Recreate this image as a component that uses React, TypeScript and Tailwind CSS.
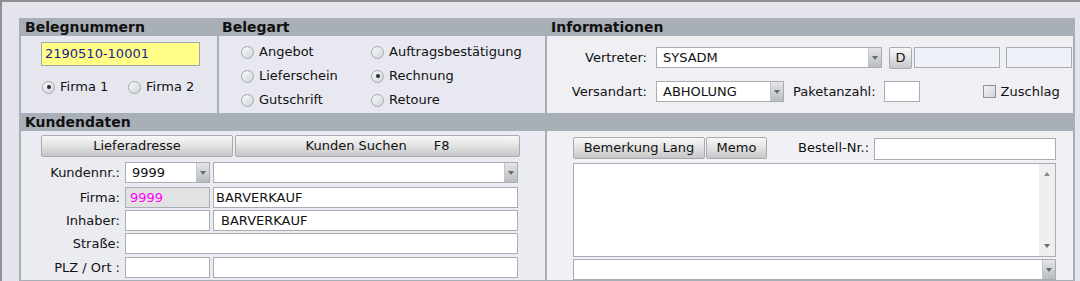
import React from 'react';

const font = { fontFamily: '"DejaVu Sans", Verdana, sans-serif' };

function Radio({ label, checked = false }: { label: string; checked?: boolean }) {
  return (
    <div className="flex items-center gap-[5px]">
      <span className="w-[13px] h-[13px] rounded-full border border-[#a3a8ae] bg-linear-to-br from-[#fbfbfc] to-[#cfd3d8] flex items-center justify-center">
        {checked && <span className="w-[4px] h-[4px] rounded-full bg-[#2b2b2b]" />}
      </span>
      <span>{label}</span>
    </div>
  );
}

function Arrow({ up = false }: { up?: boolean }) {
  return (
    <span
      className={
        up
          ? 'w-0 h-0 border-l-[3px] border-r-[3px] border-b-[4px] border-l-transparent border-r-transparent border-b-[#8a8a8a]'
          : 'w-0 h-0 border-l-[3px] border-r-[3px] border-t-[4px] border-l-transparent border-r-transparent border-t-[#6a6a6a]'
      }
    />
  );
}

function Combo({ w, value = '' }: { w: string; value?: string }) {
  return (
    <div className={`${w} h-[21px] flex border border-[#a9adb3] bg-white`}>
      <div className="flex-1 pl-[6px] leading-[19px] truncate">{value}</div>
      <div className="w-[13px] h-full bg-linear-to-b from-[#e4e6e9] to-[#b8bcc1] border-l border-[#c3c7cc] flex items-center justify-center">
        <Arrow />
      </div>
    </div>
  );
}

function Field({ w, value = '', cls = 'bg-white', pad = 'pl-[4px]' }: { w: string; value?: string; cls?: string; pad?: string }) {
  return (
    <div className={`${w} h-[21px] border border-[#a9adb3] ${cls} ${pad} leading-[19px] truncate`}>{value}</div>
  );
}

function Btn({ w, children }: { w: string; children: React.ReactNode }) {
  return (
    <div className={`${w} h-[22px] rounded-[2px] border border-[#a9abae] bg-linear-to-b from-[#f8f8f8] via-[#e2e2e2] to-[#c6c7c9] flex items-center justify-center`}>
      {children}
    </div>
  );
}

export default function App() {
  return (
    <div
      className="w-[1080px] h-[281px] overflow-hidden bg-[#e4e4ec] border-t-2 border-l-2 border-[#8f9094] pl-[17px] pt-[16px] text-[13px] text-[#111]"
      style={font}
    >
      <div className="w-[1056px] bg-[#a8afb6] px-[2px] pb-[2px]">
        {/* header 1 */}
        <div className="grid grid-cols-[196px_326px_526px] gap-x-[2px] h-[18px] font-bold text-[14px] leading-[18px]">
          <div className="pl-[4px]">Belegnummern</div>
          <div className="pl-[3px]">Belegart</div>
          <div className="pl-[4px]">Informationen</div>
        </div>

        {/* body 1 */}
        <div className="grid grid-cols-[196px_326px_526px] gap-x-[2px] h-[77px]">
          <div className="bg-[#e6e6ee] pl-[20px] pt-[6px]">
            <div className="w-[159px] h-[24px] bg-[#ffff88] border border-[#a5a8ab] pl-[3px] leading-[22px] text-[#1d1d8f]">
              2190510-10001
            </div>
            <div className="flex mt-[14px] pl-[1px] h-[14px] items-center">
              <div className="w-[86px]">
                <Radio label="Firma 1" checked />
              </div>
              <Radio label="Firma 2" />
            </div>
          </div>

          <div className="bg-[#e8e8f0] pl-[22px] pt-[4px] grid grid-cols-[130px_1fr] auto-rows-[24px] items-center">
            <Radio label="Angebot" />
            <Radio label="Auftragsbestätigung" />
            <Radio label="Lieferschein" />
            <Radio label="Rechnung" checked />
            <Radio label="Gutschrift" />
            <Radio label="Retoure" />
          </div>

          <div className="bg-[#efeff4] pt-[11px]">
            <div className="flex items-center h-[21px]">
              <div className="w-[100px] text-right">Vertreter:</div>
              <div className="ml-[9px]">
                <Combo w="w-[226px]" value="SYSADM" />
              </div>
              <div className="ml-[7px]">
                <Btn w="w-[23px]">D</Btn>
              </div>
              <div className="ml-[2px]">
                <Field w="w-[86px]" cls="bg-[#eef1f7]" />
              </div>
              <div className="ml-[6px]">
                <Field w="w-[66px]" cls="bg-[#eef1f7]" />
              </div>
            </div>
            <div className="flex items-center h-[21px] mt-[13px]">
              <div className="w-[100px] text-right">Versandart:</div>
              <div className="ml-[9px]">
                <Combo w="w-[128px]" value="ABHOLUNG" />
              </div>
              <div className="ml-[9px]">Paketanzahl:</div>
              <div className="ml-[8px]">
                <Field w="w-[36px]" />
              </div>
              <div className="ml-[63px] flex items-center gap-[5px]">
                <span className="w-[13px] h-[13px] border border-[#8e9196] bg-linear-to-br from-[#f2f2f4] to-[#d2d4d8]" />
                <span>Zuschlag</span>
              </div>
            </div>
          </div>
        </div>

        {/* header 2 */}
        <div className="h-[18px] font-bold text-[14px] leading-[18px] pl-[4px]">Kundendaten</div>

        {/* body 2 */}
        <div className="grid grid-cols-[524px_526px] gap-x-[2px] h-[149px]">
          <div className="bg-[#ebebf2] pl-[20px] pt-[4px]">
            <div className="flex gap-[2px]">
              <Btn w="w-[192px]">Lieferadresse</Btn>
              <Btn w="w-[285px]">
                <span className="ml-[4px]">Kunden Suchen</span>
                <span className="ml-[27px] mr-[4px]">F8</span>
              </Btn>
            </div>
            <div className="-ml-[20px] flex flex-col">
              <div className="flex items-center mt-[5px]">
                <div className="w-[99px] text-right">Kundennr.:</div>
                <div className="ml-[5px]"><Combo w="w-[85px]" value="9999" /></div>
                <div className="ml-[3px]"><Combo w="w-[305px]" /></div>
              </div>
              <div className="flex items-center mt-[4px]">
                <div className="w-[99px] text-right">Firma:</div>
                <div className="ml-[5px]"><Field w="w-[85px]" value="9999" cls="bg-[#e2e2e2] text-[#ff00ff]" /></div>
                <div className="ml-[3px]"><Field w="w-[305px]" value="BARVERKAUF" pad="pl-[2px]" /></div>
              </div>
              <div className="flex items-center mt-[2px]">
                <div className="w-[99px] text-right">Inhaber:</div>
                <div className="ml-[5px]"><Field w="w-[85px]" /></div>
                <div className="ml-[3px]"><Field w="w-[305px]" value="BARVERKAUF" pad="pl-[7px]" /></div>
              </div>
              <div className="flex items-center mt-[2px]">
                <div className="w-[99px] text-right">Straße:</div>
                <div className="ml-[5px]"><Field w="w-[393px]" /></div>
              </div>
              <div className="flex items-center mt-[3px]">
                <div className="w-[99px] text-right">PLZ / Ort :</div>
                <div className="ml-[5px]"><Field w="w-[85px]" /></div>
                <div className="ml-[3px]"><Field w="w-[305px]" /></div>
              </div>
            </div>
          </div>

          <div className="bg-[#f0f0f5] pl-[26px] pt-[5px]">
            <div className="flex items-center">
              <Btn w="w-[132px]">Bemerkung Lang</Btn>
              <div className="ml-[1px]"><Btn w="w-[61px]">Memo</Btn></div>
              <div className="ml-[31px]">Bestell-Nr.:</div>
              <div className="ml-[auto] mr-[17px] mt-[2px]">
                <div className="w-[182px] h-[22px] border border-[#a9adb3] bg-white" />
              </div>
            </div>
            <div className="mt-[3px] w-[483px] h-[94px] border border-[#a9adb3] bg-white flex justify-end">
              <div className="w-[16px] h-full bg-[#efefef] flex flex-col items-center justify-between py-[8px]">
                <Arrow up />
                <Arrow />
              </div>
            </div>
            <div className="mt-[2px]">
              <Combo w="w-[483px]" />
            </div>
          </div>
        </div>
      </div>
    </div>
  );
}
